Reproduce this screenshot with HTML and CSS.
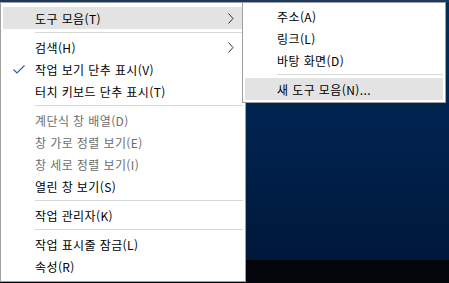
FILE: index.html
```html
<!DOCTYPE html>
<html lang="ko">
  <head>
    <meta charset="UTF-8" />
    <title>작업 표시줄 메뉴</title>
    <link rel="stylesheet" href="styles.css">
  </head>
  <body>
    <div class="screen">
      <!-- 바탕 화면과 작업 표시줄 -->
      <div class="desktop"></div>
      <div class="taskbar"></div>

      <!-- 기본 메뉴 -->
      <ul class="menu main">
        <li class="item hover">도구 모음(T)
          <svg class="arrow" width="6" height="11" viewBox="0 0 6 11"><polyline points="0.5,0.5 5,5.5 0.5,10.5" /></svg>
        </li>
        <li class="sep"></li>
        <li class="item">검색(H)
          <svg class="arrow" width="6" height="11" viewBox="0 0 6 11"><polyline points="0.5,0.5 5,5.5 0.5,10.5" /></svg>
        </li>
        <li class="item">
          <svg class="check" width="12" height="9" viewBox="0 0 12 9"><polyline points="0.5,4.5 4,8 11.5,0.5" /></svg>
          작업 보기 단추 표시(V)
        </li>
        <li class="item">터치 키보드 단추 표시(T)</li>
        <li class="sep"></li>
        <li class="item disabled">계단식 창 배열(D)</li>
        <li class="item disabled">창 가로 정렬 보기(E)</li>
        <li class="item disabled">창 세로 정렬 보기(I)</li>
        <li class="item">열린 창 보기(S)</li>
        <li class="sep"></li>
        <li class="item">작업 관리자(K)</li>
        <li class="sep"></li>
        <li class="item">작업 표시줄 잠금(L)</li>
        <li class="item">속성(R)</li>
      </ul>

      <!-- 하위 메뉴: 도구 모음 -->
      <ul class="menu sub">
        <li class="item">주소(A)</li>
        <li class="item">링크(L)</li>
        <li class="item">바탕 화면(D)</li>
        <li class="sep"></li>
        <li class="item hover">새 도구 모음(N)...</li>
      </ul>
    </div>
  </body>
</html>
```

FILE: styles.css
```css
* {
  padding: 0;
  margin: 0;
  box-sizing: border-box;
}

body {
  background-color: #02060b;
  font-family: "Noto Sans CJK KR", "Noto Sans", sans-serif;
  font-size: 12px;
  letter-spacing: 0.4px;
  color: #000;
}

.screen {
  width: 449px;
  height: 283px;
  position: relative;
  overflow: hidden;
  display: flex;
  flex-direction: column;
}

.desktop {
  height: 260px;
  background: linear-gradient(#1d3a5e 0, #1d3a5e 2px, #00305c 2px, #002450 45%, #00183a 100%);
}

.taskbar {
  flex: 1;
  background-color: #02060b;
}

/* 메뉴 공통 */
.menu {
  list-style: none;
  position: absolute;
  top: 2px;
  background-color: #fff;
  border: 1px solid #a0a0a0;
  padding: 4px 2px;
}

.main {
  left: 0;
  width: 246px;
}

.sub {
  left: 242px;
  width: 204px;
  padding: 2px;
}

.item {
  height: 22px;
  display: flex;
  align-items: center;
  padding-left: 32px;
  position: relative;
  white-space: nowrap;
}

.item.hover {
  background-color: #e3e3e3;
}

.item.disabled {
  color: #6d6d6d;
}

.sep {
  height: 1px;
  background-color: #d7d7d7;
  margin: 3px 0 3px 32px;
}

.arrow {
  margin-left: auto;
  margin-right: 9px;
  fill: none;
  stroke: #333;
  stroke-width: 1;
}

.check {
  position: absolute;
  left: 10px;
  top: 7px;
  fill: none;
  stroke: #2f5f9e;
  stroke-width: 1.2;
}
```
